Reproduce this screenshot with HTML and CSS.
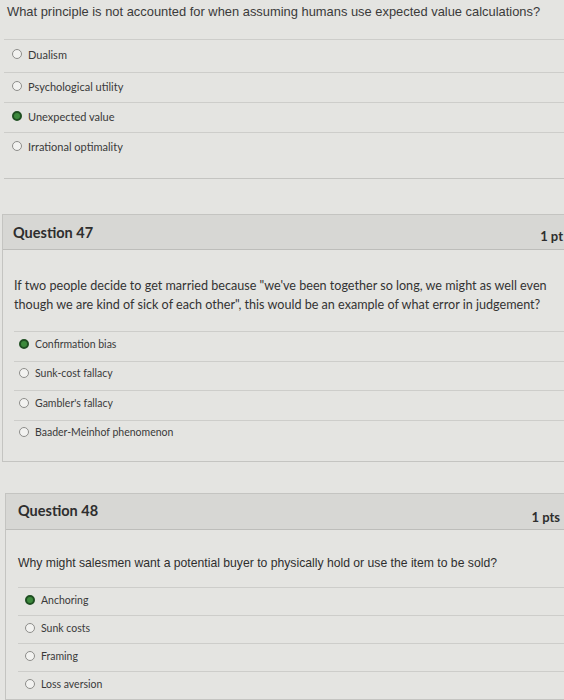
FILE: index.html
```html
<!DOCTYPE html>
<html>
<head>
<meta charset="utf-8">
<link rel="stylesheet" href="styles.css">
</head>
<body>
<div class="page">
  <section class="prev">
    <p class="prompt arial">What principle is not accounted for when assuming humans use expected value calculations?</p>
    <ul class="answers first-answers">
      <li><span class="radio"></span>Dualism</li>
      <li><span class="radio"></span>Psychological utility</li>
      <li><span class="radio on"></span>Unexpected value</li>
      <li><span class="radio"></span>Irrational optimality</li>
    </ul>
  </section>

  <section class="question q47">
    <header class="qhead">
      <h2>Question 47</h2>
      <span class="pts">1 pt</span>
    </header>
    <div class="qbody">
      <p class="prompt lato">If two people decide to get married because "we've been together so long, we might as well even though we are kind of sick of each other", this would be an example of what error in judgement?</p>
      <ul class="answers small">
        <li><span class="radio on"></span>Confirmation bias</li>
        <li><span class="radio"></span>Sunk-cost fallacy</li>
        <li><span class="radio"></span>Gambler's fallacy</li>
        <li><span class="radio"></span>Baader-Meinhof phenomenon</li>
      </ul>
    </div>
  </section>

  <section class="question q48">
    <header class="qhead">
      <h2>Question 48</h2>
      <span class="pts low">1 pts</span>
    </header>
    <div class="qbody">
      <p class="prompt arial small-arial">Why might salesmen want a potential buyer to physically hold or use the item to be sold?</p>
      <ul class="answers small tight">
        <li><span class="radio on"></span>Anchoring</li>
        <li><span class="radio"></span>Sunk costs</li>
        <li><span class="radio"></span>Framing</li>
        <li><span class="radio"></span>Loss aversion</li>
      </ul>
    </div>
  </section>
</div>
</body>
</html>
```

FILE: styles.css
```css
html, body {
  margin: 0;
  padding: 0;
  background: #e4e4e1;
  overflow: hidden;
}
body {
  font-family: Lato, "Liberation Sans", sans-serif;
  color: #333;
  width: 564px;
  height: 700px;
}
.page {
  display: flex;
  flex-direction: column;
}
p { margin: 0; }
ul { list-style: none; margin: 0; padding: 0; }
h2 { margin: 0; }

.arial { font-family: "Liberation Sans", Arial, sans-serif; }

.prev {
  padding: 3px 0 16px 0;
  border-bottom: 1px solid #c4c4c1;
  margin-left: 4px;
}
.prev .prompt {
  font-size: 12.9px;
  line-height: 18px;
  padding-left: 3px;
  color: #3a3a3a;
  margin-bottom: 18px;
}
.answers li {
  display: flex;
  align-items: center;
  border-top: 1px solid #cdcdca;
  font-size: 11px;
  color: #3a3a3a;
  height: 30px;
  box-sizing: border-box;
  padding-bottom: 3px;
}
.first-answers li { padding-left: 8px; }
.first-answers li:first-child { height: 33px; padding-bottom: 4px; }

.radio {
  width: 8px;
  height: 8px;
  border-radius: 50%;
  border: 1px solid #8d8d8a;
  background: #f2f2f0;
  margin-right: 6px;
  flex: none;
}
.radio.on {
  background: #3d8a3d;
  border: 2px solid #1f4f22;
  width: 6px;
  height: 6px;
}

.question {
  margin-top: 35px;
  width: 590px;
  border: 1px solid #c4c4c1;
  border-right: none;
}
.q47 { margin-left: 2px; }
.q48 { margin-left: 5px; margin-top: 31px; }

.qhead {
  display: flex;
  justify-content: space-between;
  align-items: center;
  background: #d7d7d4;
  border-bottom: 1px solid #bdbdba;
  height: 35px;
  box-sizing: border-box;
  padding: 0 30px 0 10px;
}
.qhead h2 {
  font-size: 14.5px;
  font-weight: 700;
  color: #2e2e2e;
}
.pts {
  font-size: 13px;
  font-weight: 700;
  color: #2e2e2e;
  padding-top: 8px;
}
.q48 .qhead { padding-left: 12px; padding-right: 36px; height: 36px; }
.q48 .qhead h2 { padding-bottom: 2px; }
.q48 .pts { padding-top: 11px; }

.qbody {
  padding: 26px 0 12px 11px;
}
.q47 .prompt.lato {
  font-size: 12.6px;
  line-height: 19px;
  color: #333;
  width: 545px;
  margin-bottom: 17px;
}
.answers.small li {
  font-size: 10.5px;
  height: 29.5px;
  padding-left: 5px;
  padding-bottom: 5px;
  margin-right: 26px;
}
.q48 .qbody { padding: 25px 0 0 12px; }
.small-arial {
  font-size: 12.2px;
  line-height: 16px;
  color: #2e2e2e;
  margin-bottom: 16px;
}
.answers.tight li { height: 28px; padding-left: 7px; padding-bottom: 3px; }
```
